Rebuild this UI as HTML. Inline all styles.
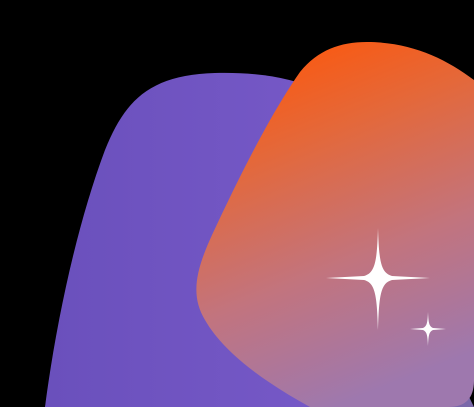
<!DOCTYPE html>
<html><head><style>
html,body{margin:0;padding:0;background:#000;width:474px;height:407px;overflow:hidden}
</style></head><body>
<svg width="474" height="407" viewBox="0 0 474 407" xmlns="http://www.w3.org/2000/svg">
<defs>
<linearGradient id="p" x1="0" y1="0" x2="1" y2="0">
<stop offset="0" stop-color="#6a50bc"/><stop offset="0.6" stop-color="#7558c6"/><stop offset="1" stop-color="#7a68a8"/>
</linearGradient>
<linearGradient id="o" x1="0.2" y1="0" x2="0.5" y2="1">
<stop offset="0" stop-color="#ff5608"/><stop offset="0.3" stop-color="#e4683a"/><stop offset="0.65" stop-color="#c2747e"/><stop offset="1" stop-color="#9e78ae"/>
</linearGradient>
</defs>
<path d="M45 407 C55 330 75 230 105 150 C125 100 150 75 215 73 C260 72 290 78 320 90 L474 407 Z" fill="url(#p)"/>
<path d="M367 42 C410 42 445 58 474 80 L474 380 C474 398 466 407 448 407 L310 407 C270 385 225 355 205 320 C190 295 196 270 212 235 C240 175 270 115 300 72 C318 50 340 42 367 42 Z" fill="url(#o)"/>
<g fill="#fff">
<path d="M378 228 C379 262 381 273 392 276 L430 278 L392 280 C381 283 379 294 378 330 C377 294 375 283 364 280 L326 278 L364 276 C375 273 377 262 378 228 Z"/>
<path d="M428 312 C428.5 323 429 326 433 328 L446 329 L433 330 C429 332 428.5 335 428 346 C427.5 335 427 332 423 330 L410 329 L423 328 C427 326 427.5 323 428 312 Z"/>
</g>
</svg>
</body></html>
